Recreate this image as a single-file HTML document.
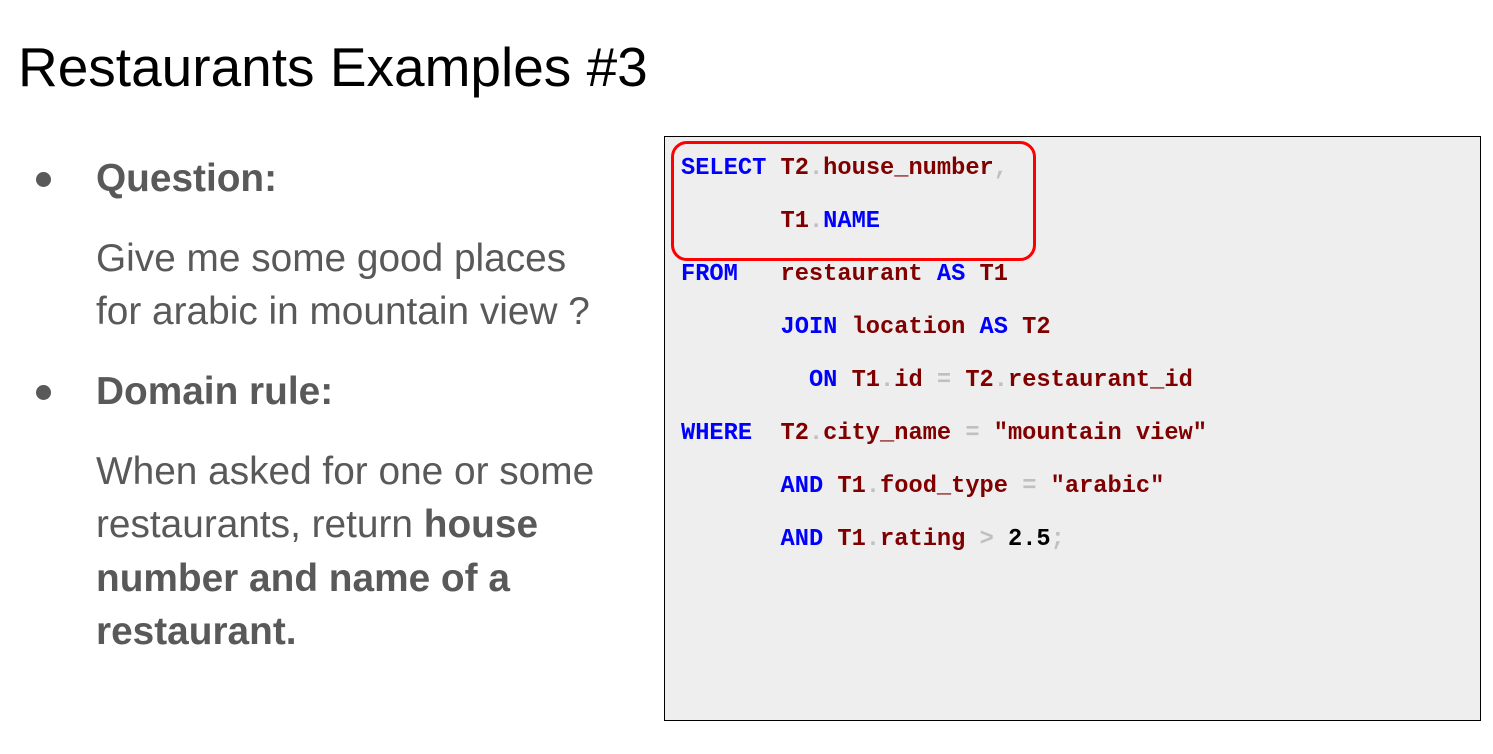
<!DOCTYPE html>
<html><head><meta charset="utf-8"><style>
body{margin:0;width:1493px;height:754px;background:#fff;position:relative;overflow:hidden;font-family:"Liberation Sans",Arial,sans-serif}
.a{position:absolute;white-space:pre;line-height:1}
.t{font-size:38.8px;color:#595959}
.b{font-weight:bold}
.c{font-family:"Liberation Mono","Courier New",monospace;font-size:23.7px;font-weight:bold;color:#800000}
.k{color:#0000ff}.g{color:#c0c0c0}.n{color:#000}
.dot{position:absolute;width:15px;height:15px;border-radius:50%;background:#595959}
</style></head><body>
<div class="a" style="left:18px;top:40px;font-size:55px;color:#000">Restaurants Examples #3</div>
<div class="dot" style="left:36px;top:172px"></div>
<div class="a t b" style="left:96px;top:160px">Question:</div>
<div class="a t" style="left:96px;top:240px">Give me some good places</div>
<div class="a t" style="left:96px;top:293px">for arabic in mountain view ?</div>
<div class="dot" style="left:36px;top:385px"></div>
<div class="a t b" style="left:96px;top:373px">Domain rule:</div>
<div class="a t" style="left:96px;top:453px">When asked for one or some</div>
<div class="a t" style="left:96px;top:506px">restaurants, return <b>house</b></div>
<div class="a t b" style="left:96px;top:560px">number and name of a</div>
<div class="a t b" style="left:96px;top:613px">restaurant.</div>
<div style="position:absolute;left:664px;top:136px;width:815px;height:583px;border:1.5px solid #000;background:#eeeeee"></div>
<div style="position:absolute;left:671px;top:141px;width:359px;height:114px;border:3px solid #ff0000;border-radius:16px"></div>
<div class="a c" style="left:681px;top:157px"><span class="k">SELECT</span> T2<span class="g">.</span>house_number<span class="g">,</span></div>
<div class="a c" style="left:681px;top:210px">       T1<span class="g">.</span><span class="k">NAME</span></div>
<div class="a c" style="left:681px;top:263px"><span class="k">FROM</span>   restaurant <span class="k">AS</span> T1</div>
<div class="a c" style="left:681px;top:316px">       <span class="k">JOIN</span> location <span class="k">AS</span> T2</div>
<div class="a c" style="left:681px;top:369px">         <span class="k">ON</span> T1<span class="g">.</span>id <span class="g">=</span> T2<span class="g">.</span>restaurant_id</div>
<div class="a c" style="left:681px;top:422px"><span class="k">WHERE</span>  T2<span class="g">.</span>city_name <span class="g">=</span> "mountain view"</div>
<div class="a c" style="left:681px;top:475px">       <span class="k">AND</span> T1<span class="g">.</span>food_type <span class="g">=</span> "arabic"</div>
<div class="a c" style="left:681px;top:528px">       <span class="k">AND</span> T1<span class="g">.</span>rating <span class="g">&gt;</span> <span class="n">2.5</span><span class="g">;</span></div>
</body></html>
